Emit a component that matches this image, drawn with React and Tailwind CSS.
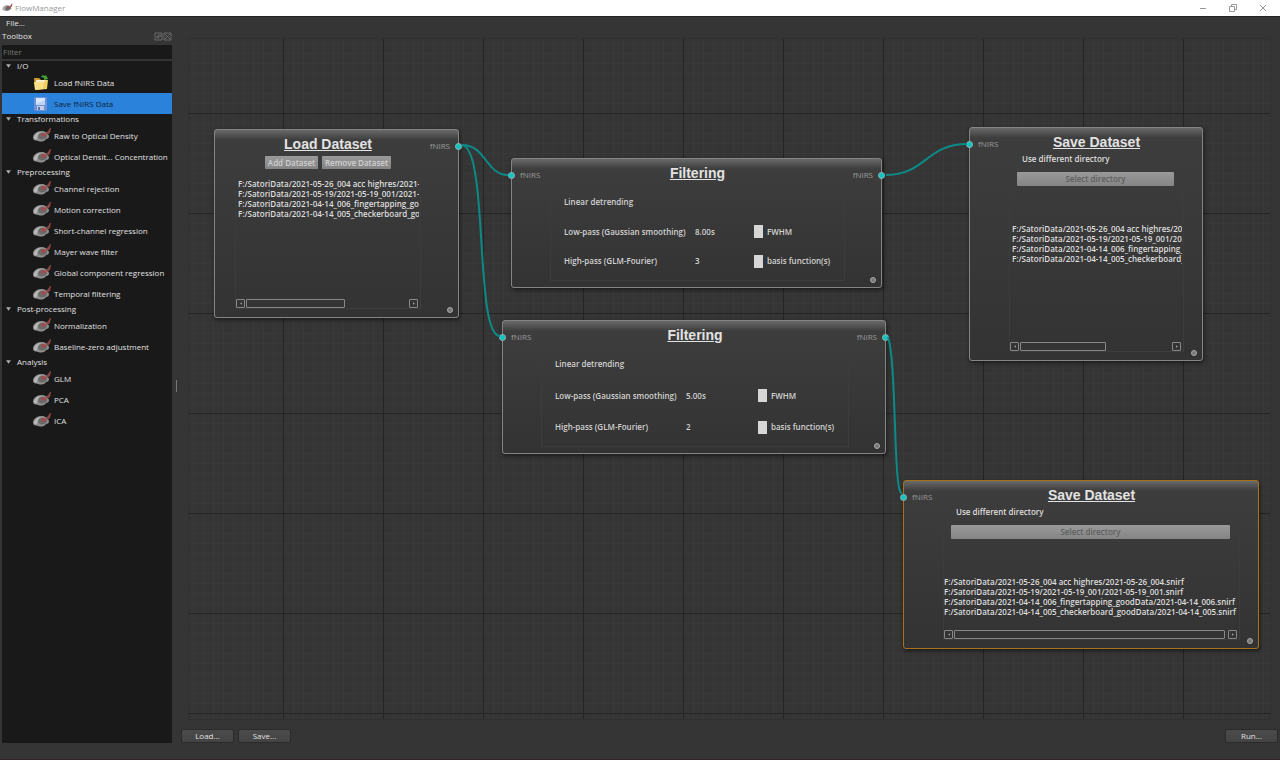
import React, { useState } from 'react'

const toolbox = [
  {
    title: 'I/O',
    items: [
      { name: 'Load fNIRS Data', icon: 'folder' },
      { name: 'Save fNIRS Data', icon: 'disk' },
    ],
  },
  {
    title: 'Transformations',
    items: [
      { name: 'Raw to Optical Density' },
      { name: 'Optical Densit... Concentration' },
    ],
  },
  {
    title: 'Preprocessing',
    items: [
      { name: 'Channel rejection' },
      { name: 'Motion correction' },
      { name: 'Short-channel regression' },
      { name: 'Mayer wave filter' },
      { name: 'Global component regression' },
      { name: 'Temporal filtering' },
    ],
  },
  {
    title: 'Post-processing',
    items: [{ name: 'Normalization' }, { name: 'Baseline-zero adjustment' }],
  },
  {
    title: 'Analysis',
    items: [{ name: 'GLM' }, { name: 'PCA' }, { name: 'ICA' }],
  },
]

const files = [
  'F:/SatoriData/2021-05-26_004 acc highres/2021-05-26_004.snirf',
  'F:/SatoriData/2021-05-19/2021-05-19_001/2021-05-19_001.snirf',
  'F:/SatoriData/2021-04-14_006_fingertapping_goodData/2021-04-14_006.snirf',
  'F:/SatoriData/2021-04-14_005_checkerboard_goodData/2021-04-14_005.snirf',
]

function BrainIcon({ className }) {
  return (
    <svg viewBox="0 0 20 18" className={className} aria-hidden="true">
      <path d="M1 10.500C1 7 5 4 9 4c4 0 7 2 8 5 0 2-1 3-3 3-1 2-3 2.500-6 2.500-2 0-2-1-4-1-2 0-3-1-3-3z" fill="#8f8f8f" />
      <path d="M2 10C3 7 6 5 9 5c-3 2-4 4-4 7-2 1-3 0-3-2z" fill="#b9b9b9" />
      <path d="M8 6.500c3-1 6 0 7 2 0 3-3 4-6 4-3-1-4-4-1-6z" fill="#6a6a6a" />
      <path d="M10 6.500c2-1 4 0 4 1.500-1 2-3 2-4 1-1-1-1-2 0-2.500z" fill="#a84848" />
      <path d="M14 6l2-2 2-3 1 0-1 5-3 2z" fill="#8a4644" />
    </svg>
  )
}

function FolderIcon({ className }) {
  return (
    <svg viewBox="0 0 20 18" className={className} aria-hidden="true">
      <path d="M2 4h5l2 2h6v9H3z" fill="#c99b2e" />
      <path d="M4 6h11v8H4z" fill="#f6efcf" />
      <path d="M3 8h9l2-2h2l-1 9-11 1z" fill="#f3cf62" />
      <path d="M2 8h10l-1 7-8 1z" fill="#fadf86" />
      <path d="M9 3c1-2 3-2 4-1l1-1 2 4-4 1 0-2c-1-1-2-1-3-1z" fill="#3fa52c" />
    </svg>
  )
}

function DiskIcon({ className }) {
  return (
    <svg viewBox="0 0 20 18" className={className} aria-hidden="true">
      <rect x="2" y="2" width="13" height="14" rx="1" fill="#6f8fd6" />
      <rect x="4" y="3" width="9" height="7" fill="#bcd4f5" />
      <path d="M4 3h9v2L4 9z" fill="#d8e7fa" />
      <rect x="5" y="11" width="7" height="4" fill="#c7d0e4" />
      <rect x="6" y="12" width="2" height="3" fill="#5574b8" />
    </svg>
  )
}

function ToolIcon({ type }) {
  if (type === 'folder') return <FolderIcon className="h-[18px] w-5" />
  if (type === 'disk') return <DiskIcon className="h-[18px] w-5" />
  return <BrainIcon className="h-[18px] w-5" />
}

function TitleBar() {
  return (
    <header className="flex h-4 shrink-0 items-center bg-white pl-0.5 text-[8px] text-[#999]">
      <BrainIcon className="h-[10px] w-[11px]" />
      <span className="ml-0.5">FlowManager</span>
      <div className="ml-auto flex text-[#999]">
        <button type="button" aria-label="Minimize" className="flex w-[30px] justify-center">
          <svg viewBox="0 0 8 8" className="h-2 w-2" fill="none" stroke="currentColor"><path d="M1 4.5h6" /></svg>
        </button>
        <button type="button" aria-label="Restore" className="flex w-[30px] justify-center">
          <svg viewBox="0 0 8 8" className="h-2 w-2" fill="none" stroke="currentColor"><path d="M.5 2.5h5v5h-5zM2.5 2.5v-2h5v5h-2" /></svg>
        </button>
        <button type="button" aria-label="Close" className="mr-0.5 flex w-[30px] justify-center">
          <svg viewBox="0 0 8 8" className="h-2 w-2" fill="none" stroke="currentColor"><path d="M1 1l6 6M7 1L1 7" /></svg>
        </button>
      </div>
    </header>
  )
}

function Toolbox() {
  const [selected, setSelected] = useState('Save fNIRS Data')
  const [filter, setFilter] = useState('')

  return (
    <aside className="flex w-[170px] shrink-0 flex-col">
      <div className="flex h-4 items-center">
        <h2>Toolbox</h2>
        <div className="ml-auto flex text-[#8c8c8c]">
          <button type="button" aria-label="Float">
            <svg viewBox="0 0 9 9" className="h-[9px] w-[9px]" fill="none" stroke="currentColor" strokeWidth=".6"><path d="M1 1h7v7H1zM3 4h2v2H3zM4 3h3v2" /></svg>
          </button>
          <button type="button" aria-label="Close toolbox">
            <svg viewBox="0 0 9 9" className="h-[9px] w-[9px]" fill="none" stroke="currentColor" strokeWidth=".6"><path d="M1 1h7v7H1zM2 2l5 5M7 2L2 7" /></svg>
          </button>
        </div>
      </div>
      <input
        type="text"
        aria-label="Filter"
        placeholder="Filter"
        value={filter}
        onChange={(e) => setFilter(e.target.value)}
        className="mt-px h-[14px] bg-[#191919] px-px pb-0.5 outline-none placeholder:text-[#777]"
      />
      <div className="mt-0.5 flex-1 bg-[#191919]">
        {toolbox.map((group) => (
          <section key={group.title}>
            <h3 className="flex h-[11px] items-center pb-px pl-1">
              <svg viewBox="0 0 6 4" className="mr-1.5 h-1 w-[5px] fill-[#aaa]"><path d="M0 0h6L3 4z" /></svg>
              {group.title}
            </h3>
            {group.items
              .filter((item) => item.name.toLowerCase().includes(filter.toLowerCase()))
              .map((item) => (
                <button
                  key={item.name}
                  type="button"
                  onClick={() => setSelected(item.name)}
                  className={`flex h-[21px] w-full items-center gap-0.5 pl-[30px] text-left whitespace-nowrap ${
                    selected === item.name ? 'bg-[#2a82da] text-[#10243a]' : ''
                  }`}
                >
                  <ToolIcon type={item.icon} />
                  {item.name}
                </button>
              ))}
          </section>
        ))}
      </div>
    </aside>
  )
}

function Port({ side }) {
  return (
    <div
      className={`absolute top-[11px] flex items-center gap-[5px] text-[#9a9a9a] ${
        side === 'in' ? '-left-1' : '-right-1 flex-row-reverse'
      }`}
    >
      <span className="h-[7px] w-[7px] rounded-full border border-[#8fb5b5] bg-[#12c4c0]"></span>
      <span className="text-[8px] leading-[10px]">fNIRS</span>
    </div>
  )
}

function Node({ title, place, pad, input, output, active, children }) {
  return (
    <article
      className={`absolute flex flex-col rounded-[3px] border bg-linear-to-b from-[#696969] from-0% via-[#3d3d3d] via-[10px] to-[#333] shadow-[1px_2px_4px_rgba(0,0,0,0.5)] ${
        active ? 'border-[#a8721c]' : 'border-[#848484]'
      } ${place} ${pad}`}
    >
      {input && <Port side="in" />}
      {output && <Port side="out" />}
      <h2 className="h-6 pt-1.5 text-center font-['Liberation_Sans',sans-serif] text-[14px] leading-4 font-bold whitespace-nowrap text-[#e2e2e2] underline">
        {title}
      </h2>
      <div className="flex min-h-0 flex-1 flex-col border border-[#3c3c3c]">{children}</div>
      <span className="absolute right-[5px] bottom-1 h-[6px] w-[6px] rounded-full border border-[#aaa] bg-[#777]"></span>
    </article>
  )
}

function FileList({ thumb, inset }) {
  return (
    <>
      <ul className={`overflow-hidden leading-[10px] font-semibold whitespace-nowrap text-[#dedede] ${inset ? 'mr-px ml-0.5' : ''}`}>
        {files.map((file) => (
          <li key={file}>{file}</li>
        ))}
      </ul>
      <div className="mt-auto flex h-[9px] gap-px pr-0.5 text-[#999]">
        <button type="button" aria-label="Scroll left" className="flex w-[9px] items-center justify-center rounded-[1px] border border-[#888]">
          <svg viewBox="0 0 3 4" className="h-[3px] w-0.5 fill-current"><path d="M3 0v4L0 2z" /></svg>
        </button>
        <div className="flex-1">
          <div className={`h-full rounded-[1px] border border-[#888] ${thumb}`}></div>
        </div>
        <button type="button" aria-label="Scroll right" className="ml-0.5 flex w-[9px] items-center justify-center rounded-[1px] border border-[#888]">
          <svg viewBox="0 0 3 4" className="h-[3px] w-0.5 fill-current"><path d="M0 0v4L3 2z" /></svg>
        </button>
      </div>
    </>
  )
}

function LoadNode() {
  const button = 'h-[13px] rounded-[1px] bg-linear-to-b from-[#9a9a9a] to-[#858585] font-semibold text-[#d0d0d0]'
  return (
    <Node title="Load Dataset" output place="left-[25px] top-[90px] h-[189px] w-[245px]" pad="pl-5 pr-[37px] pb-2">
      <div className="mb-[10px] flex justify-center gap-1 pt-px">
        <button type="button" className={`w-[53px] ${button}`}>Add Dataset</button>
        <button type="button" className={`w-[69px] ${button}`}>Remove Dataset</button>
      </div>
      <FileList thumb="w-[62%]" inset />
    </Node>
  )
}

function SaveNode({ place, active, thumb, inset }) {
  return (
    <Node title="Save Dataset" input active={active} place={place} pad="pl-[39px] pr-[18px] pb-2">
      <p className="pl-3 leading-[12px] font-semibold text-[#dedede]">Use different directory</p>
      <button
        type="button"
        className="mr-[9px] ml-[7px] mt-[7px] mb-[38px] h-[14px] shrink-0 rounded-[1px] bg-linear-to-b from-[#999] to-[#858585] font-semibold text-[#5e5e5e]"
      >
        Select directory
      </button>
      <FileList thumb={thumb} inset={inset} />
    </Node>
  )
}

function SpinRow({ id, label, value, unit }) {
  const [current, setCurrent] = useState(value)
  return (
    <div className="grid grid-cols-[131px_1fr_90px] items-center">
      <label htmlFor={id}>{label}</label>
      <input
        id={id}
        type="text"
        value={current}
        onChange={(e) => setCurrent(e.target.value)}
        className="w-full min-w-0 bg-transparent outline-none"
      />
      <div className="flex items-center gap-1">
        <span className="h-[13px] w-[9px] bg-[#d6d6d6]"></span>
        {unit}
      </div>
    </div>
  )
}

function FilterNode({ id, place, smoothing, order }) {
  return (
    <Node title="Filtering" input output place={place} pad="pl-[38px] pr-9 pb-1.5">
      <div className="flex flex-1 flex-col justify-between pt-[11px] pb-3 pl-[13px] leading-[14px] font-semibold text-[#d2d2d2]">
        <p>Linear detrending</p>
        <SpinRow id={`${id}-low`} label="Low-pass (Gaussian smoothing)" value={smoothing} unit="FWHM" />
        <SpinRow id={`${id}-high`} label="High-pass (GLM-Fourier)" value={order} unit="basis function(s)" />
      </div>
    </Node>
  )
}

function Canvas() {
  return (
    <main className="relative flex-1 overflow-hidden border border-[#303030]">
      <svg className="absolute inset-0 h-full w-full" aria-hidden="true">
        <defs>
          <pattern id="minor" width="10" height="10" x="4" y="4" patternUnits="userSpaceOnUse">
            <path d="M.5 0v10M0 .5h10" stroke="#393939" />
          </pattern>
          <pattern id="major" width="100" height="100" x="94" y="74" patternUnits="userSpaceOnUse">
            <path d="M.5 0v100M0 .5h100" stroke="#242424" />
          </pattern>
        </defs>
        <rect width="100%" height="100%" fill="url(#minor)" />
        <rect width="100%" height="100%" fill="url(#major)" />
      </svg>
      <LoadNode />
      <FilterNode id="filter-a" place="left-[322px] top-[119px] h-[130px] w-[371px]" smoothing="8.00s" order="3" />
      <FilterNode id="filter-b" place="left-[313px] top-[281px] h-[134px] w-[384px]" smoothing="5.00s" order="2" />
      <SaveNode place="left-[780px] top-[88px] h-[234px] w-[234px]" thumb="w-[58%]" inset />
      <SaveNode active place="left-[714px] top-[441px] h-[169px] w-[356px]" thumb="w-full" />
      <svg className="pointer-events-none absolute inset-0 h-full w-full" fill="none" stroke="#0b8a87" strokeWidth="2" aria-hidden="true">
        <path d="M273 106C297 106 297 136 319 136" />
        <path d="M273 106C300 109 285 297 311 297" />
        <path d="M697 136C737 136 737 105 778 105" />
        <path d="M699 298C708 325 704 457 713 454" />
      </svg>
    </main>
  )
}

function FooterButton({ children }) {
  return (
    <button
      type="button"
      className="h-[14px] w-[53px] rounded-[2px] border border-[#2b2b2b] bg-linear-to-b from-[#4b4b4b] to-[#434343]"
    >
      {children}
    </button>
  )
}

function App() {
  return (
    <div className="flex h-screen flex-col overflow-hidden border-b border-[#33262b] bg-[#353535] font-['Open_Sans','Noto_Sans',sans-serif] text-[8px] leading-[10px] text-[#e0e0e0]">
      <TitleBar />
      <nav className="flex h-3 shrink-0 items-center border-t border-[#222] pl-1.5">
        <button type="button">File...</button>
      </nav>
      <div className="flex min-h-0 flex-1 pb-4 pl-0.5">
        <Toolbox />
        <div className="flex w-[9px] shrink-0 items-center justify-center">
          <span className="h-3 w-px bg-[#777]"></span>
        </div>
        <div className="flex min-w-0 flex-1 flex-col">
          <div className="flex min-h-0 flex-1 pt-[10px] pr-[9px] pl-[7px]">
            <Canvas />
          </div>
          <div className="mt-[9px] flex gap-1 pr-0.5">
            <FooterButton>Load...</FooterButton>
            <FooterButton>Save...</FooterButton>
            <div className="ml-auto flex">
              <FooterButton>Run...</FooterButton>
            </div>
          </div>
        </div>
      </div>
    </div>
  )
}

export default App
